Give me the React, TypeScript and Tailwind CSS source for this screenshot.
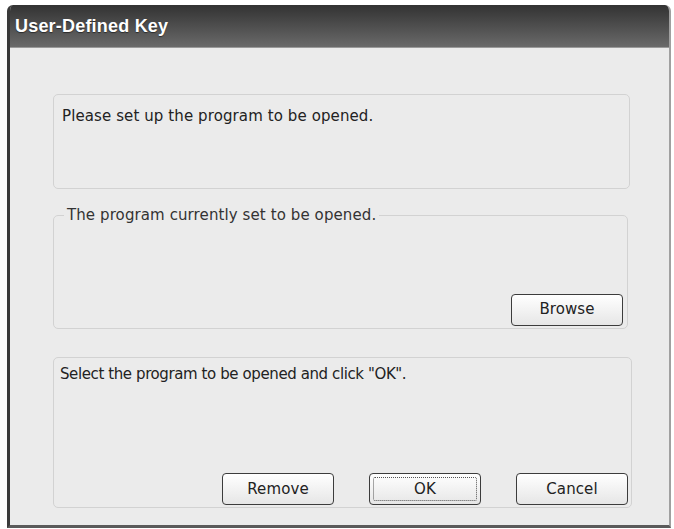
import React from 'react';

const font = { fontFamily: '"DejaVu Sans", "Liberation Sans", sans-serif' };

function WinButton({ label, focused = false }: { label: string; focused?: boolean }) {
  return (
    <button
      type="button"
      className="flex h-[32px] w-[112px] items-center justify-center rounded-[4px] border-[1.5px] border-[#3c3c3c] bg-gradient-to-b from-white to-[#e6e6e6] p-[3px] text-[15px] text-[#222]"
    >
      <span
        className={
          focused
            ? 'flex h-full w-full items-center justify-center rounded-[2px] border border-dotted border-[#555]'
            : 'flex h-full w-full items-center justify-center'
        }
      >
        {label}
      </span>
    </button>
  );
}

export default function App() {
  return (
    <div className="h-[529px] w-[674px] bg-white pl-[7px] pt-[5px]" style={font}>
      <div className="flex h-[523px] w-[664px] flex-col overflow-hidden rounded-t-[6px] border-b-[3px] border-l-[3px] border-r-[2px] border-b-[#5a5a5a] border-l-[#3a3a3a] border-r-[#a0a0a0] bg-[#ebebeb]">
        {/* Title bar */}
        <div className="flex h-[43px] shrink-0 items-center border-b border-[#9a9a9a] bg-gradient-to-b from-[#333] via-[#4e4e4e] to-[#6a6a6a] pl-[5px]">
          <span
            className="text-[18px] font-bold tracking-[0.2px] text-white"
            style={{ fontFamily: '"Liberation Sans", Arial, sans-serif', textShadow: '0 1px 1px rgba(0,0,0,0.5)' }}
          >
            User-Defined Key
          </span>
        </div>

        {/* Body */}
        <div className="flex flex-1 flex-col pl-[43px] pt-[46px] text-[15px] tracking-[0.1px] text-[#222]">
          <div className="h-[95px] w-[577px] rounded-[5px] border border-[#d2d2d2] bg-[#ebebeb] pl-[8px] pt-[10px]">
            Please set up the program to be opened.
          </div>

          <fieldset className="mt-[15px] h-[125px] w-[575px] rounded-[5px] border border-[#d2d2d2] px-[4px]">
            <legend className="ml-[6px] px-[3px] text-[#333]">
              The program currently set to be opened.
            </legend>
            <div className="flex h-[99px] items-end justify-end">
              <WinButton label="Browse" />
            </div>
          </fieldset>

          <div className="mt-[28px] flex h-[151px] w-[579px] flex-col rounded-[5px] border border-[#d2d2d2] pb-[2px] pl-[6px] pr-[3px] pt-[5px]">
            <div className="tracking-[-0.4px]">Select the program to be opened and click "OK".</div>
            <div className="mt-auto flex justify-end gap-[35px] tracking-[0.1px]">
              <WinButton label="Remove" />
              <WinButton label="OK" focused />
              <WinButton label="Cancel" />
            </div>
          </div>
        </div>
      </div>
    </div>
  );
}
